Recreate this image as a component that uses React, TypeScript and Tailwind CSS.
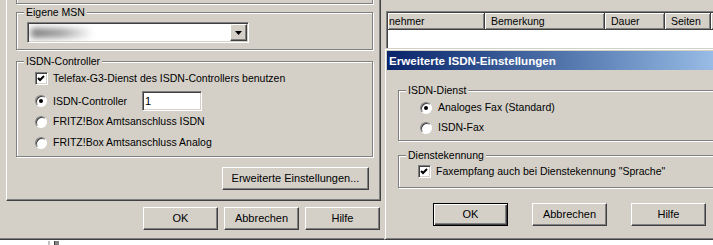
import React from "react";

const sunken =
  "border border-t-[#808080] border-l-[#808080] border-r-white border-b-white shadow-[inset_1px_1px_0_#404040,inset_-1px_-1px_0_#d4d0c8]";
const raised =
  "border border-t-white border-l-white border-r-[#404040] border-b-[#404040] shadow-[inset_-1px_-1px_0_#808080]";
const etched = "border border-[#808080] shadow-[inset_1px_1px_0_#fff,1px_1px_0_#fff]";

function Button({ label, isDefault = false, className = "w-[75px]" }: { label: string; isDefault?: boolean; className?: string }) {
  return (
    <div
      className={`flex items-center justify-center h-[23px] bg-[#d4d0c8] text-[11px] leading-none ${className} ${
        isDefault
          ? "border border-black shadow-[inset_1px_1px_0_#fff,inset_-1px_-1px_0_#404040,inset_-2px_-2px_0_#808080]"
          : raised
      }`}
    >
      {label}
    </div>
  );
}

function CheckBox({ label }: { label: string }) {
  return (
    <div className="flex items-center h-[13px] gap-[5px]">
      <div className={`w-[13px] h-[13px] bg-white shrink-0 flex items-center justify-center ${sunken}`}>
        <svg width="9" height="9" viewBox="0 0 9 9" className="-ml-px -mt-px">
          <path d="M1 4 L3 6 L7 2" stroke="#000" strokeWidth="2" fill="none" />
        </svg>
      </div>
      <span className="text-[10.5px] leading-none whitespace-nowrap">{label}</span>
    </div>
  );
}

function Radio({ label, checked = false }: { label: string; checked?: boolean }) {
  return (
    <div className="flex items-center h-[13px] gap-[6px]">
      <Dot checked={checked} />
      <span className="text-[10.5px] leading-none whitespace-nowrap">{label}</span>
    </div>
  );
}

function Dot({ checked }: { checked: boolean }) {
  return (
    <div className="w-[12px] h-[12px] shrink-0 rounded-full bg-white border border-t-[#808080] border-l-[#808080] border-r-white border-b-white shadow-[inset_1px_1px_0_#404040] flex items-center justify-center">
      {checked && <div className="w-[4px] h-[4px] rounded-full bg-black" />}
    </div>
  );
}

function Group({ label, className, children }: { label: string; className: string; children?: React.ReactNode }) {
  return (
    <div className={`relative ${etched} ${className}`}>
      <span className="absolute -top-[7px] left-[7px] bg-[#d4d0c8] px-[2px] text-[10.5px] leading-[13px] whitespace-nowrap">
        {label}
      </span>
      {children}
    </div>
  );
}

export default function App() {
  return (
    <div className="relative w-[713px] h-[245px] overflow-hidden bg-white text-black font-['Liberation_Sans',Arial,sans-serif]">
      {/* desktop / background window */}
      <div className="absolute left-0 top-0 w-[713px] h-[240px] bg-[#d4d0c8]" />

      {/* list view of the background window */}
      <div className="absolute left-[386px] top-[11px] w-[340px] h-[40px] bg-white border-t border-l border-[#808080] shadow-[inset_1px_1px_0_#404040] pl-[1px] pt-[1px]">
        <div className="flex h-[17px] text-[10.5px] leading-none">
          {[
            { t: "nehmer", w: "w-[97px]" },
            { t: "Bemerkung", w: "w-[120px]" },
            { t: "Dauer", w: "w-[60px]" },
            { t: "Seiten", w: "w-[46px]" },
            { t: "", w: "w-[30px]" },
          ].map((c, i) => (
            <div
              key={i}
              className={`${c.w} shrink-0 h-[17px] bg-[#d4d0c8] flex items-center ${i === 0 ? "pl-[1px]" : "pl-[6px]"} border-r border-b border-[#404040] shadow-[inset_1px_1px_0_#fff,inset_-1px_-1px_0_#808080]`}
            >
              {c.t}
            </div>
          ))}
        </div>
      </div>

      {/* left dialog */}
      <div className="absolute left-0 top-0 w-[386px] h-[240px] bg-[#d4d0c8] border-b border-[#404040] shadow-[inset_0_-1px_0_#808080] flex flex-col">
        {/* tab page */}
        <div className="ml-[6px] mt-[-10px] w-[375px] h-[211px] border-l border-l-white border-r border-b border-r-[#404040] border-b-[#404040] shadow-[inset_-1px_-1px_0_#808080] pl-[9px] flex flex-col">
          <div className="w-[357px] h-[14px] border-x border-b border-[#808080] shadow-[inset_1px_0_0_#fff,1px_1px_0_#fff]" />

          <Group label="Eigene MSN" className="mt-[8px] w-[357px] h-[38px] pl-[10px] pt-[9px]">
            <div className={`w-[222px] h-[21px] bg-white flex items-center ${sunken} p-[1px]`}>
              <div className="flex-1 h-full flex items-center overflow-hidden">
                <div className="ml-[2px] w-[62px] h-[10px] bg-gradient-to-r from-[#7c7c7c] via-[#a4a4a4] to-transparent blur-[3px]" />
              </div>
              <div className={`w-[17px] h-[17px] bg-[#d4d0c8] flex items-center justify-center ${raised}`}>
                <svg width="7" height="4" viewBox="0 0 7 4">
                  <path d="M0 0 H7 L3.5 4 Z" fill="#000" />
                </svg>
              </div>
            </div>
          </Group>

          <Group label="ISDN-Controller" className="mt-[11px] w-[357px] h-[96px] pl-[18px] pt-[10px] flex flex-col">
            <CheckBox label="Telefax-G3-Dienst des ISDN-Controllers benutzen" />
            <div className="mt-[6px] h-[20px] flex items-center">
              <div className="w-[107px] shrink-0">
                <Radio label="ISDN-Controller" checked />
              </div>
              <div className={`w-[60px] h-[20px] bg-white ${sunken} flex items-center pl-[2px] text-[11px] leading-none`}>1</div>
            </div>
            <div className="mt-[4px]">
              <Radio label="FRITZ!Box Amtsanschluss ISDN" />
            </div>
            <div className="mt-[8px]">
              <Radio label="FRITZ!Box Amtsanschluss Analog" />
            </div>
          </Group>

          <div className="mt-[10px] ml-[206px]">
            <Button label="Erweiterte Einstellungen..." className="w-[147px]" />
          </div>
        </div>

        <div className="mt-[6px] ml-[143px] flex gap-[6px]">
          <Button label="OK" />
          <Button label="Abbrechen" />
          <Button label="Hilfe" />
        </div>
      </div>

      {/* right dialog */}
      <div className="absolute left-[384px] top-[48px] w-[360px] h-[192px] bg-[#d4d0c8] border border-t-[#d4d0c8] border-l-[#d4d0c8] border-r-[#404040] border-b-[#404040] shadow-[inset_1px_1px_0_#fff,inset_-1px_-1px_0_#808080] p-[2px] flex flex-col">
        <div className="h-[19px] bg-gradient-to-r from-[#0a246a] to-[#a6caf0] flex items-center pl-[2px] text-white font-bold text-[11.6px] leading-none whitespace-nowrap">
          Erweiterte ISDN-Einstellungen
        </div>
        <div className="pl-[11px] flex flex-col">
          <Group label="ISDN-Dienst" className="mt-[20px] w-[400px] h-[51px] pl-[21px] pt-[10px] flex flex-col">
            <Radio label="Analoges Fax (Standard)" checked />
            <div className="mt-[7px]">
              <Radio label="ISDN-Fax" />
            </div>
          </Group>
          <Group label="Dienstekennung" className="mt-[14px] w-[400px] h-[33px] pl-[19px] pt-[9px]">
            <CheckBox label={'Faxempfang auch bei Dienstekennung "Sprache"'} />
          </Group>
          <div className="mt-[15px] ml-[35px] flex gap-[24px]">
            <Button label="OK" isDefault />
            <Button label="Abbrechen" />
            <Button label="Hilfe" />
          </div>
        </div>
      </div>

      {/* fragment below the dialogs */}
      <div className="absolute left-[48px] top-[241px] w-[12px] h-[4px] flex gap-[4px]">
        <div className="w-[2px] h-full bg-[#c0c0c0]" />
        <div className="w-[5px] h-full bg-[#808080] border-l border-[#404040]" />
      </div>
    </div>
  );
}
